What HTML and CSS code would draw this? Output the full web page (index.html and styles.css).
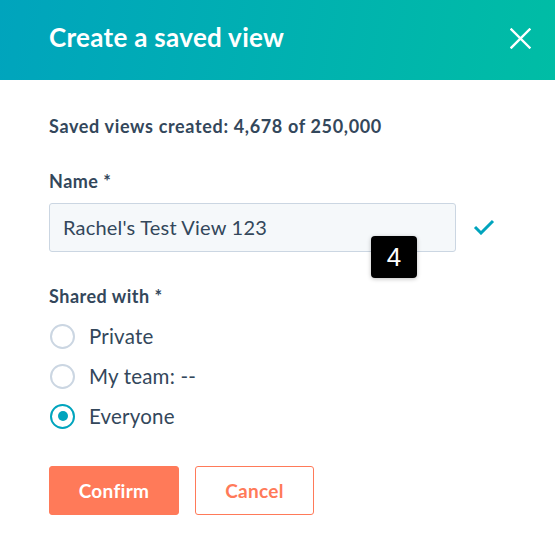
FILE: index.html
```html
<!DOCTYPE html>
<html>
<head>
<meta charset="utf-8">
<link rel="stylesheet" href="styles.css">
</head>
<body>
<div class="modal">
  <header class="header">
    <h1 class="title">Create a saved view</h1>
    <button class="close" aria-label="Close">
      <svg width="21" height="21" viewBox="0 0 21 21"><path d="M1.5 1.5 L19.5 19.5 M19.5 1.5 L1.5 19.5" stroke="#fff" stroke-width="2.4" stroke-linecap="square" fill="none"/></svg>
    </button>
  </header>
  <div class="content">
    <p class="count">Saved views created: 4,678 of 250,000</p>
    <div class="field">
      <label class="label">Name *</label>
      <div class="input-row">
        <div class="input-wrap">
          <div class="input">Rachel's Test View 123</div>
          <div class="badge">4</div>
        </div>
        <svg class="check" width="22" height="16" viewBox="0 0 22 16"><path d="M2 8 L8 14 L20 2" stroke="#00a4bd" stroke-width="3" fill="none" stroke-linejoin="miter"/></svg>
      </div>
    </div>
    <div class="field shared">
      <label class="label">Shared with *</label>
      <div class="radios">
        <div class="radio"><span class="dot"></span><span class="rlabel">Private</span></div>
        <div class="radio"><span class="dot"></span><span class="rlabel">My team: --</span></div>
        <div class="radio checked"><span class="dot"></span><span class="rlabel">Everyone</span></div>
      </div>
    </div>
    <div class="actions">
      <button class="btn primary">Confirm</button>
      <button class="btn secondary">Cancel</button>
    </div>
  </div>
</div>
</body>
</html>
```
FILE: styles.css
```css
html, body {
  margin: 0;
  padding: 0;
  background: #fff;
}
body {
  font-family: "Lato", "Open Sans", sans-serif;
  color: #33475b;
  width: 555px;
  height: 537px;
  overflow: hidden;
}
.header {
  height: 80px;
  background: linear-gradient(100deg, #00a4bd 0%, #00bda5 100%);
  display: flex;
  align-items: center;
  justify-content: space-between;
  padding: 0 24px 0 49px;
  box-sizing: border-box;
}
.title {
  margin: 0;
  color: #fff;
  font-size: 26px;
  font-weight: 700;
  letter-spacing: 0.3px;
  line-height: 32px;
  padding-bottom: 6px;
}
.close {
  background: none;
  border: 0;
  padding: 0;
  width: 21px;
  height: 21px;
  margin-bottom: 4px;
  margin-right: 0;
}
.content {
  padding: 0 49px;
}
.count {
  margin: 34px 0 0;
  font-size: 18px;
  font-weight: 700;
  line-height: 24px;
  letter-spacing: 0.65px;
}
.field {
  margin-top: 31px;
}
.label {
  display: block;
  font-size: 18px;
  font-weight: 700;
  line-height: 24px;
  letter-spacing: 0.5px;
}
.input-row {
  display: flex;
  align-items: center;
  margin-top: 10px;
}
.input-wrap {
  position: relative;
  width: 407px;
}
.input {
  height: 49px;
  box-sizing: border-box;
  background: #f5f8fa;
  border: 1px solid #cbd6e2;
  border-radius: 3px;
  padding: 0 13px;
  font-size: 20px;
  line-height: 47px;
  letter-spacing: 0.2px;
}
.badge {
  position: absolute;
  left: 322px;
  top: 33px;
  width: 46px;
  height: 42px;
  background: #000;
  color: #fff;
  border-radius: 4px;
  font-family: "Liberation Sans", Arial, sans-serif;
  font-size: 26px;
  line-height: 42px;
  text-align: center;
  box-shadow: 0 1px 4px rgba(0,0,0,0.25);
}
.check {
  margin-left: 17px;
  margin-top: -2px;
}
.shared {
  margin-top: 32px;
}
.radios {
  margin-top: 16px;
  display: flex;
  flex-direction: column;
  gap: 16px;
}
.radio {
  display: flex;
  align-items: center;
  height: 24px;
}
.dot {
  width: 25px;
  height: 25px;
  box-sizing: border-box;
  border: 2px solid #cbd6e2;
  border-radius: 50%;
  margin-left: 1px;
  background: #fff;
  position: relative;
  flex: none;
}
.checked .dot {
  border-color: #00a4bd;
}
.checked .dot::after {
  content: "";
  position: absolute;
  left: 5.5px;
  top: 5.5px;
  width: 10px;
  height: 10px;
  border-radius: 50%;
  background: #00a4bd;
}
.rlabel {
  margin-left: 14px;
  font-size: 20.5px;
  letter-spacing: 0.2px;
}
.actions {
  display: flex;
  gap: 16px;
  margin-top: 38px;
}
.btn {
  height: 49px;
  border-radius: 3px;
  font-family: "Lato", sans-serif;
  font-size: 19px;
  font-weight: 700;
  letter-spacing: 0.3px;
  padding: 0;
}
.primary {
  width: 130px;
  background: #ff7a59;
  border: 1px solid #ff7a59;
  color: #fff;
}
.secondary {
  width: 119px;
  background: #fff;
  border: 1px solid #ff7a59;
  color: #ff7a59;
}
```
